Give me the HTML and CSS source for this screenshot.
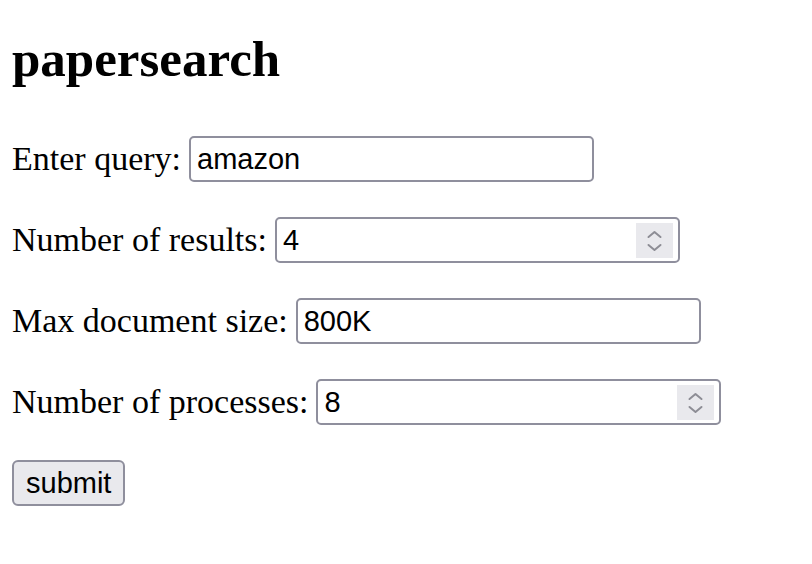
FILE: index.html
```html
<!DOCTYPE html>
<html>
<head>
<meta charset="utf-8">
<title>papersearch</title>
<link rel="stylesheet" href="styles.css">
</head>
<body>
<h1 class="title">papersearch</h1>
<form class="form">
  <div class="row">
    <label class="label">Enter query:</label>
    <div class="field"><input class="input" type="text" value="amazon"></div>
  </div>
  <div class="row">
    <label class="label">Number of results:</label>
    <div class="field"><input class="input" type="text" value="4"><span class="spin"><svg width="37" height="35" viewBox="0 0 37 35"><polyline points="12.5,14 18.5,9 24.5,14" fill="none" stroke="#8d8d95" stroke-width="2" stroke-linecap="round" stroke-linejoin="round"/><polyline points="12.5,22 18.5,27 24.5,22" fill="none" stroke="#8d8d95" stroke-width="2" stroke-linecap="round" stroke-linejoin="round"/></svg></span></div>
  </div>
  <div class="row">
    <label class="label">Max document size:</label>
    <div class="field"><input class="input" type="text" value="800K"></div>
  </div>
  <div class="row">
    <label class="label">Number of processes:</label>
    <div class="field"><input class="input" type="text" value="8"><span class="spin"><svg width="37" height="35" viewBox="0 0 37 35"><polyline points="12.5,14 18.5,9 24.5,14" fill="none" stroke="#8d8d95" stroke-width="2" stroke-linecap="round" stroke-linejoin="round"/><polyline points="12.5,22 18.5,27 24.5,22" fill="none" stroke="#8d8d95" stroke-width="2" stroke-linecap="round" stroke-linejoin="round"/></svg></span></div>
  </div>
  <div class="row">
    <button class="submit" type="button">submit</button>
  </div>
</form>
</body>
</html>
```
FILE: styles.css
```css
html, body {
  margin: 0;
  background: #ffffff;
}
body {
  padding: 12px;
  font-family: "Liberation Serif", "Times New Roman", serif;
  font-size: 34px;
  color: #000;
}
.title {
  font-size: 51px;
  font-weight: bold;
  line-height: 57px;
  margin: 19px 0 48px 0;
}
.form {
  display: flex;
  flex-direction: column;
  gap: 35px;
}
.row {
  display: flex;
  align-items: center;
  gap: 8px;
  height: 46px;
}
.label {
  white-space: nowrap;
}
.field {
  box-sizing: border-box;
  width: 405px;
  height: 46px;
  border: 2px solid #8f8f9d;
  border-radius: 5px;
  display: flex;
  align-items: center;
  background: #fff;
}
.input {
  flex: 1;
  min-width: 0;
  border: none;
  outline: none;
  background: transparent;
  padding: 0 0 0 6px;
  font-family: "Liberation Sans", Arial, sans-serif;
  font-size: 29px;
  color: #000;
  height: 40px;
}
.spin {
  width: 37px;
  height: 35px;
  margin-right: 5px;
  background: #e9e9ed;
  display: flex;
}
.submit {
  box-sizing: border-box;
  height: 46px;
  padding: 0 12px;
  border: 2px solid #8f8f9d;
  border-radius: 6px;
  background: #e9e9ed;
  font-family: "Liberation Sans", Arial, sans-serif;
  font-size: 29px;
  color: #000;
}
```
